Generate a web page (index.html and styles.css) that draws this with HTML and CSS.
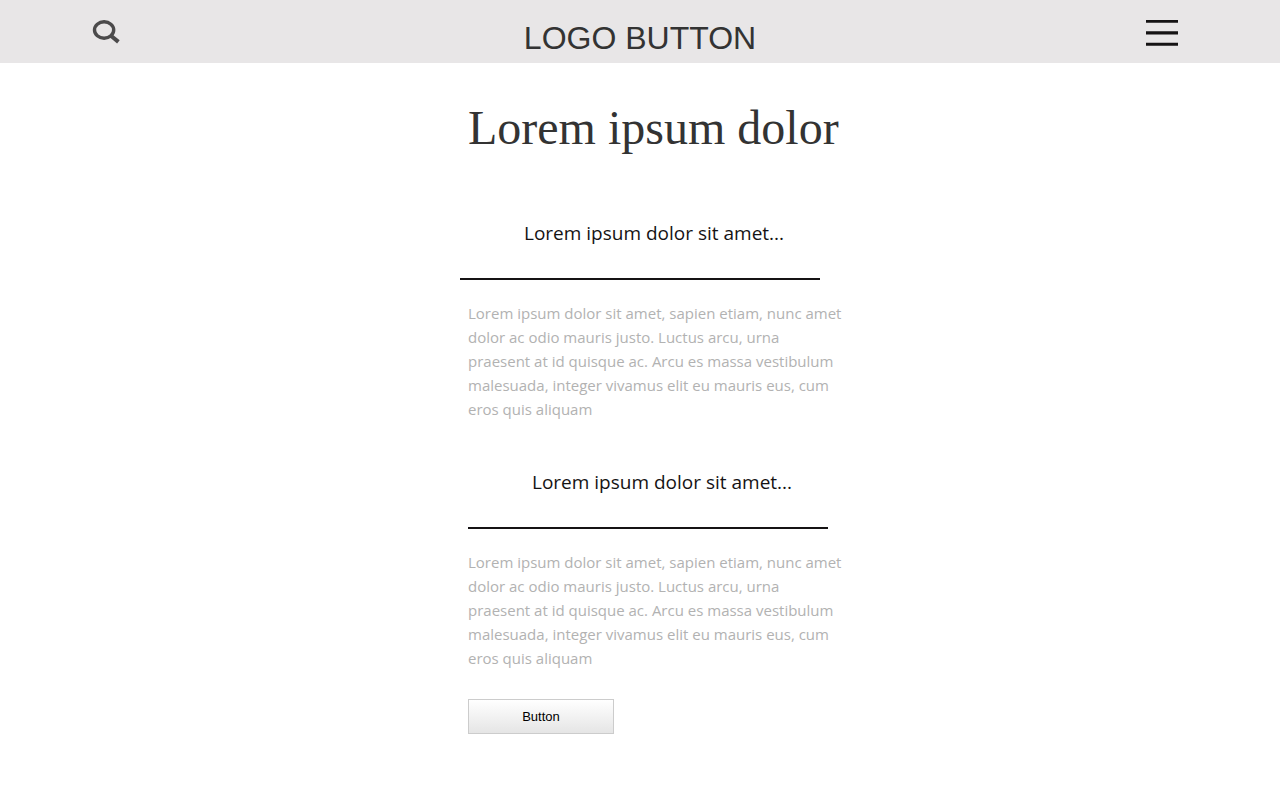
FILE: index.html
```html
<!DOCTYPE html>
<html lang="en">
<head>
<meta charset="utf-8">
<meta name="viewport" content="width=device-width, initial-scale=1">
<title>Lorem ipsum dolor</title>
<link rel="stylesheet" href="styles.css">
</head>
<body>
<header class="bar">
  <button class="icon-button search" type="button" aria-label="Search">
    <svg width="28" height="24" viewBox="0 0 28 24" fill="none" stroke="#4b4a4b"><ellipse cx="12.1" cy="10" rx="9.6" ry="8.2" stroke-width="3.4"/><path d="M18.6 15.5 26.4 21.9" stroke-width="4"/></svg>
  </button>
  <a class="logo" href="#">LOGO BUTTON</a>
  <button class="icon-button menu" type="button" aria-label="Menu">
    <svg width="32" height="26" viewBox="0 0 32 26" fill="#151314"><path d="M0 0h32v2.8H0zM0 11.2h32v3.2H0zM0 22.8h32v3H0z"/></svg>
  </button>
</header>
<main class="page">
  <h1 class="title">Lorem ipsum dolor</h1>
  <section class="entry">
    <h2 class="heading">Lorem ipsum dolor sit amet...</h2>
    <p class="text">Lorem ipsum dolor sit amet, sapien etiam, nunc amet<br>dolor ac odio mauris justo. Luctus arcu, urna<br>praesent at id quisque ac. Arcu es massa vestibulum malesuada, integer vivamus elit eu mauris eus, cum eros quis aliquam</p>
  </section>
  <section class="entry">
    <h2 class="heading heading-inset">Lorem ipsum dolor sit amet...</h2>
    <p class="text">Lorem ipsum dolor sit amet, sapien etiam, nunc amet<br>dolor ac odio mauris justo. Luctus arcu, urna<br>praesent at id quisque ac. Arcu es massa vestibulum malesuada, integer vivamus elit eu mauris eus, cum eros quis aliquam</p>
  </section>
  <button class="action" type="button">Button</button>
</main>
</body>
</html>
```
FILE: styles.css
```css
* {
  box-sizing: border-box;
}

body {
  margin: 0;
  background: #fff;
  color: #151314;
  font-family: "Open Sans", "Noto Sans", sans-serif;
}

.bar {
  display: grid;
  grid-template-columns: 1fr auto 1fr;
  align-items: start;
  padding: 20px 102px 7px 92px;
  background: #e8e6e7;
}

.icon-button {
  padding: 0;
  border: 0;
  background: none;
  cursor: pointer;
}

.icon-button svg {
  display: block;
}

.search {
  justify-self: start;
}

.menu {
  justify-self: end;
}

.logo {
  padding-left: 10px;
  color: #333;
  font: 32px/36px "Liberation Sans", Arial, sans-serif;
  text-decoration: none;
}

.page {
  max-width: 416px;
  margin: 0 auto;
  padding: 37px 0 40px 28px;
}

.title {
  margin: 0 0 53px;
  padding-left: 8px;
  color: #333;
  font: 48px/56px "Liberation Serif", "Times New Roman", serif;
  white-space: nowrap;
}

.entry + .entry {
  padding-top: 37px;
}

.heading {
  max-width: 360px;
  margin: 0 0 21px;
  padding: 12px 0 33px 64px;
  border-bottom: 2px solid #151314;
  font-size: 19px;
  font-weight: 400;
  line-height: 24px;
}

.heading-inset {
  margin-left: 8px;
}

.text {
  margin: 0 0 0 8px;
  color: #b2b2b2;
  font-size: 15px;
  line-height: 24px;
}

.action {
  display: block;
  width: 146px;
  height: 35px;
  margin: 29px 0 0 8px;
  border: 1px solid #ccc;
  background: linear-gradient(#fff, #e5e5e5);
  color: #000;
  font: 13px "Liberation Sans", Arial, sans-serif;
}
```
